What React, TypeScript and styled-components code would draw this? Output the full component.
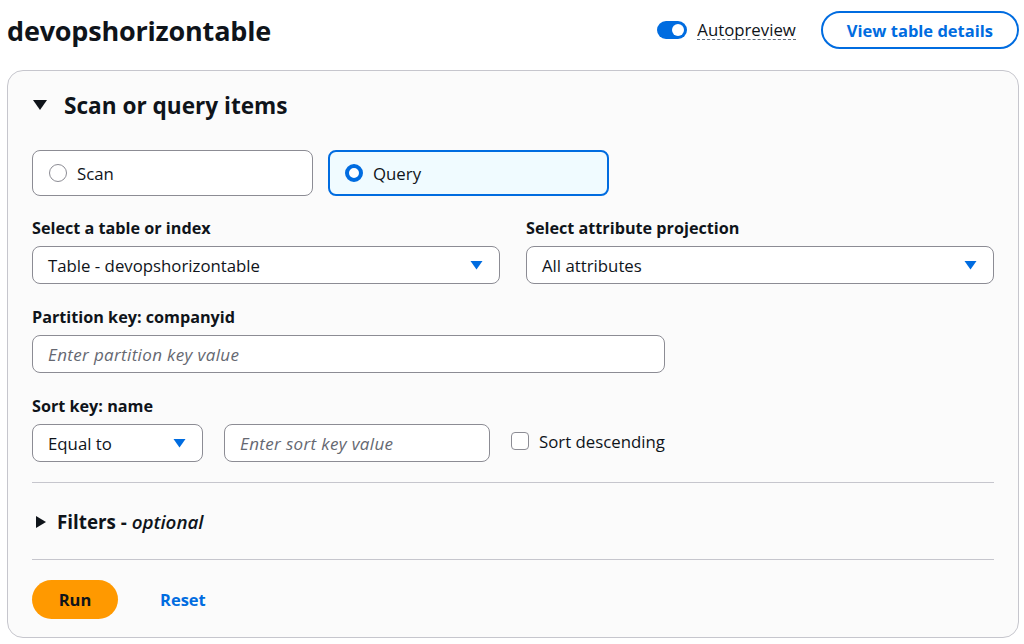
import React from 'react'
import styled, { createGlobalStyle } from 'styled-components'

const GlobalStyle = createGlobalStyle`
  body {
    margin: 0;
    background: #ffffff;
    font-family: 'Open Sans', 'Noto Sans', sans-serif;
    color: #0f141a;
  }
`

const Page = styled.div`
  width: 1024px;
  height: 644px;
  box-sizing: border-box;
  padding: 10px 5px 6px 7px;
  display: flex;
  flex-direction: column;
  gap: 20px;
`

const TopBar = styled.div`
  display: flex;
  align-items: center;
  height: 40px;
`

const Title = styled.h1`
  margin: 0;
  font-size: 27px;
  font-weight: 700;
  letter-spacing: -0.2px;
  flex: 1;
`

const Toggle = styled.span`
  width: 30px;
  height: 18px;
  border-radius: 9px;
  background: #006ce0;
  position: relative;
  margin-right: 10px;
  &::after {
    content: '';
    position: absolute;
    right: 3px;
    top: 3px;
    width: 12px;
    height: 12px;
    border-radius: 50%;
    background: #fff;
  }
`

const Autopreview = styled.span`
  font-size: 16.8px;
  border-bottom: 1px dashed #5f6b7a;
  line-height: 18px;
  margin-right: 25px;
`

const OutlineButton = styled.button`
  font-family: inherit;
  height: 38px;
  padding: 0 24px;
  border: 2px solid #006ce0;
  border-radius: 20px;
  background: #fff;
  color: #006ce0;
  font-size: 16.5px;
  font-weight: 700;
`

const Panel = styled.section`
  flex: 1;
  border: 1px solid #c6c6cd;
  border-radius: 16px;
  background: #fbfbfb;
  padding: 18px 24px 0 24px;
  display: flex;
  flex-direction: column;
`

const Expander = styled.div<{ $size: number; $indent: number; $gap: number }>`
  display: flex;
  align-items: center;
  gap: ${p => p.$gap}px;
  padding-left: ${p => p.$indent}px;
  font-size: ${p => p.$size}px;
  font-weight: 700;
  height: 32px;
  em {
    font-weight: 600;
  }
`

const Caret = styled.svg`
  flex: none;
`

const Tiles = styled.div`
  display: flex;
  gap: 15px;
  margin-top: 29px;
`

const Tile = styled.div<{ $on?: boolean }>`
  width: 281px;
  height: 46px;
  box-sizing: border-box;
  border: ${p => (p.$on ? '2px solid #006ce0' : '1px solid #8c8c94')};
  background: ${p => (p.$on ? '#f0fbff' : '#fff')};
  border-radius: 8px;
  display: flex;
  align-items: center;
  gap: 10px;
  padding-left: ${p => (p.$on ? 15 : 16)}px;
  font-size: 16.8px;
`

const Radio = styled.span<{ $on?: boolean }>`
  width: ${p => (p.$on ? 10 : 16)}px;
  height: ${p => (p.$on ? 10 : 16)}px;
  border-radius: 50%;
  border: ${p => (p.$on ? '4px solid #006ce0' : '1px solid #8c8c94')};
  background: #fff;
`

const Row = styled.div<{ $gap: number }>`
  display: flex;
  gap: ${p => p.$gap}px;
  align-items: center;
`

const Field = styled.div<{ $w: number }>`
  width: ${p => p.$w}px;
  display: flex;
  flex-direction: column;
`

const Label = styled.div`
  font-size: 16.2px;
  font-weight: 700;
  height: 18px;
  line-height: 18px;
  margin-bottom: 9px;
`

const Box = styled.div<{ $w?: number }>`
  width: ${p => (p.$w ? `${p.$w}px` : 'auto')};
  height: 38px;
  box-sizing: border-box;
  border: 1px solid #8c8c94;
  border-radius: 8px;
  background: #fff;
  display: flex;
  align-items: center;
  padding: 0 16px 0 15px;
  font-size: 16.8px;
  span {
    flex: 1;
  }
`

const Placeholder = styled.span`
  font-style: italic;
  color: #656871;
  font-size: 17px;
  letter-spacing: 0.35px;
`

const Check = styled.span`
  width: 18px;
  height: 18px;
  box-sizing: border-box;
  border: 1px solid #8c8c94;
  border-radius: 4px;
  background: #fff;
  margin-right: 10px;
`

const CheckRow = styled.label`
  display: flex;
  align-items: center;
  font-size: 16.8px;
  margin-bottom: 4px;
`

const Divider = styled.hr`
  border: none;
  border-top: 1px solid #c6c6cd;
  margin: 0;
`

const Actions = styled.div`
  display: flex;
  align-items: center;
  gap: 42px;
  margin-top: 20px;
`

const RunButton = styled.button`
  font-family: inherit;
  width: 86px;
  height: 39px;
  border: none;
  border-radius: 20px;
  background: #ff9900;
  color: #0f141a;
  font-size: 16.5px;
  font-weight: 700;
`

const LinkButton = styled.span`
  color: #006ce0;
  font-size: 16.5px;
  font-weight: 700;
`

const Spacer = styled.div<{ $h: number }>`
  height: ${p => p.$h}px;
  flex: none;
`

const Arrow = () => (
  <svg width="13" height="10" viewBox="0 0 13 10">
    <path d="M0.5 1 H12.5 L6.5 9.5 Z" fill="#006ce0" />
  </svg>
)

const Select = ({ value, w }: { value: string; w?: number }) => (
  <Box $w={w}>
    <span>{value}</span>
    <Arrow />
  </Box>
)

export default function App() {
  return (
    <Page>
      <GlobalStyle />
      <TopBar>
        <Title>devopshorizontable</Title>
        <Toggle />
        <Autopreview>Autopreview</Autopreview>
        <OutlineButton>View table details</OutlineButton>
      </TopBar>
      <Panel>
        <Expander $size={22.6} $indent={1} $gap={17}>
          <Caret width="14" height="12" viewBox="0 0 14 12">
            <path d="M0 1 H14 L7 11 Z" fill="#0f141a" />
          </Caret>
          Scan or query items
        </Expander>
        <Tiles>
          <Tile>
            <Radio />
            Scan
          </Tile>
          <Tile $on>
            <Radio $on />
            Query
          </Tile>
        </Tiles>
        <Spacer $h={23} />
        <Row $gap={26}>
          <Field $w={468}>
            <Label>Select a table or index</Label>
            <Select value="Table - devopshorizontable" />
          </Field>
          <Field $w={468}>
            <Label>Select attribute projection</Label>
            <Select value="All attributes" />
          </Field>
        </Row>
        <Spacer $h={24} />
        <Field $w={633}>
          <Label>Partition key: companyid</Label>
          <Box>
            <Placeholder>Enter partition key value</Placeholder>
          </Box>
        </Field>
        <Spacer $h={24} />
        <Field $w={700}>
          <Label>Sort key: name</Label>
          <Row $gap={21}>
            <Select value="Equal to" w={171} />
            <Box $w={266}>
              <Placeholder>Enter sort key value</Placeholder>
            </Box>
            <CheckRow>
              <Check />
              Sort descending
            </CheckRow>
          </Row>
        </Field>
        <Spacer $h={20} />
        <Divider />
        <Spacer $h={23} />
        <Expander $size={18.8} $indent={4} $gap={11}>
          <Caret width="10" height="12" viewBox="0 0 10 12">
            <path d="M0 0 V12 L10 6 Z" fill="#0f141a" />
          </Caret>
          <span>
            Filters - <em>optional</em>
          </span>
        </Expander>
        <Spacer $h={21} />
        <Divider />
        <Actions>
          <RunButton>Run</RunButton>
          <LinkButton>Reset</LinkButton>
        </Actions>
      </Panel>
    </Page>
  )
}
